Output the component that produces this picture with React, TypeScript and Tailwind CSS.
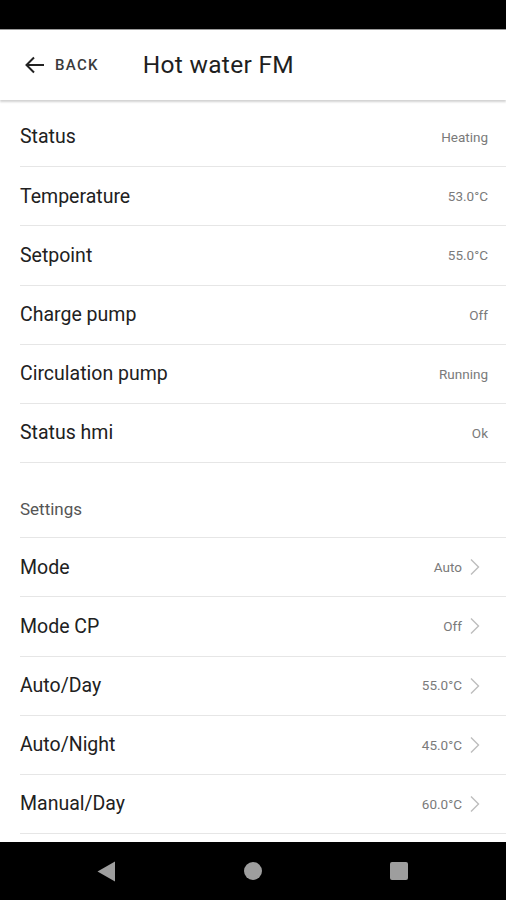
import React from "react";

const statusRows = [
  { label: "Status", value: "Heating" },
  { label: "Temperature", value: "53.0°C" },
  { label: "Setpoint", value: "55.0°C" },
  { label: "Charge pump", value: "Off" },
  { label: "Circulation pump", value: "Running" },
  { label: "Status hmi", value: "Ok" },
];

const settingRows = [
  { label: "Mode", value: "Auto" },
  { label: "Mode CP", value: "Off" },
  { label: "Auto/Day", value: "55.0°C" },
  { label: "Auto/Night", value: "45.0°C" },
  { label: "Manual/Day", value: "60.0°C" },
];

function Chevron() {
  return (
    <svg width="12" height="18" viewBox="0 0 12 18" className="ml-[7px]">
      <path d="M2 1.5 L9.5 9 L2 16.5" fill="none" stroke="#bdbdbd" strokeWidth="1.4" />
    </svg>
  );
}

export default function App() {
  return (
    <div
      className="w-[506px] h-[900px] flex flex-col bg-white overflow-hidden"
      style={{ fontFamily: "Roboto, 'Liberation Sans', sans-serif" }}
    >
      <div className="h-[29px] bg-black shrink-0" />
      <div className="h-[71px] shrink-0 flex items-center bg-white border-t border-[#9a9a9a] shadow-[0_1.5px_2px_rgba(0,0,0,0.18)] relative z-10">
        <div className="flex items-center pl-[23px]">
          <svg width="24" height="24" viewBox="0 0 24 24">
            <path d="M21 12 H4 M11 4.5 L3.5 12 L11 19.5" fill="none" stroke="#222" strokeWidth="2" />
          </svg>
          <span className="ml-[8px] text-[15px] font-medium tracking-[1.3px] text-[#3a3a3a]">BACK</span>
        </div>
        <span className="ml-[44px] text-[24.5px] text-[#1f1f1f] tracking-[0.3px] pt-[1px]">Hot water FM</span>
      </div>
      <div className="flex-1 overflow-hidden pt-[8px]">
        {statusRows.map((r) => (
          <div key={r.label} className="h-[59.2px] ml-[20px] flex items-center justify-between border-b border-[#e6e6e6] pr-[18px]">
            <span className="text-[19.5px] text-[#212121]">{r.label}</span>
            <span className="text-[13.5px] text-[#7a7a7a]">{r.value}</span>
          </div>
        ))}
        <div className="h-[75px] ml-[20px] flex items-center border-b border-[#e6e6e6] pt-[19px]">
          <span className="text-[17px] text-[#555]">Settings</span>
        </div>
        {settingRows.map((r) => (
          <div key={r.label} className="h-[59.2px] ml-[20px] flex items-center justify-between border-b border-[#e6e6e6] pr-[25px]">
            <span className="text-[19.5px] text-[#212121]">{r.label}</span>
            <span className="flex items-center">
              <span className="text-[13.5px] text-[#7a7a7a]">{r.value}</span>
              <Chevron />
            </span>
          </div>
        ))}
      </div>
      <div className="h-[58px] shrink-0 bg-black flex items-center">
        <div className="w-[506px] flex items-center justify-between pl-[97px] pr-[98px]">
          <svg width="19" height="21" viewBox="0 0 19 21">
            <path d="M18 0.5 V20.5 L0.5 10.5 Z" fill="#9e9e9e" />
          </svg>
          <div className="w-[18px] h-[18px] rounded-full bg-[#9e9e9e]" />
          <div className="w-[18px] h-[18px] rounded-[2px] bg-[#9e9e9e]" />
        </div>
      </div>
    </div>
  );
}
